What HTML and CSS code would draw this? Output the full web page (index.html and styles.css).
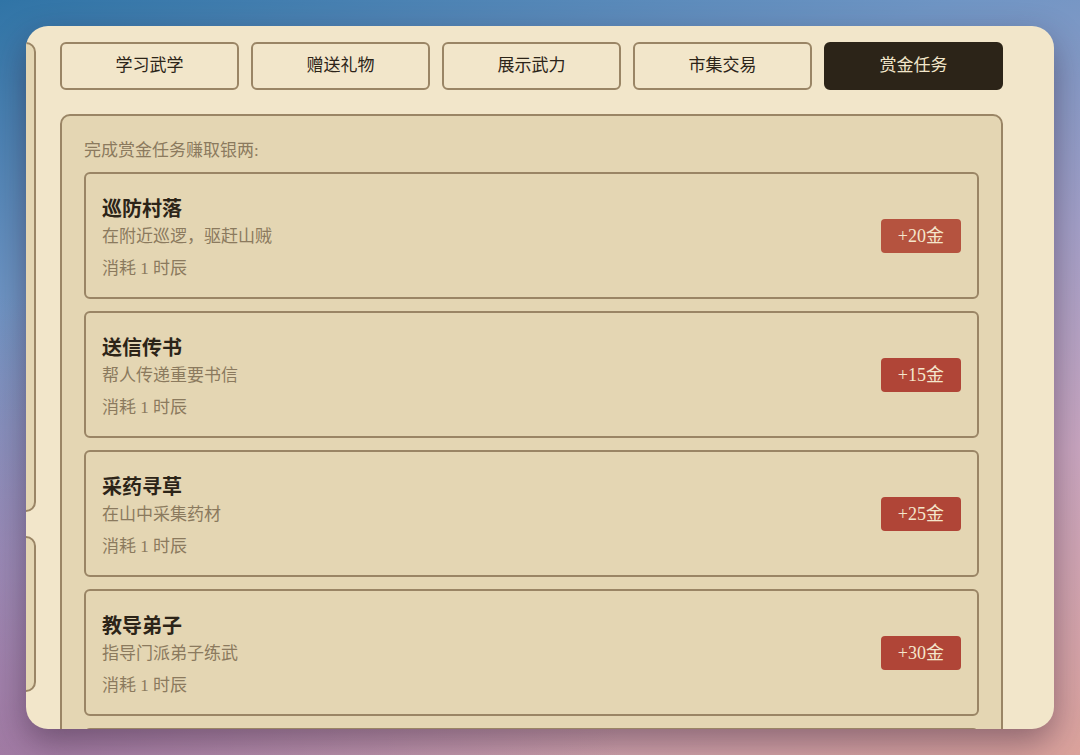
FILE: index.html
```html
<!DOCTYPE html>
<html lang="zh-CN">
<head>
<meta charset="utf-8">
<title>赏金任务</title>
<link rel="stylesheet" href="styles.css">
</head>
<body>
<div class="window">
  <aside class="sidebar">
    <div class="side-panel side-panel-tall"></div>
    <div class="side-panel side-panel-short"></div>
  </aside>
  <main class="main">
    <nav class="tabs">
      <button class="tab">学习武学</button>
      <button class="tab">赠送礼物</button>
      <button class="tab">展示武力</button>
      <button class="tab">市集交易</button>
      <button class="tab tab-active">赏金任务</button>
    </nav>
    <section class="panel">
      <div class="panel-label">完成赏金任务赚取银两:</div>
      <div class="quest-list">
        <div class="quest">
          <div class="quest-info">
            <div class="quest-title">巡防村落</div>
            <div class="quest-desc">在附近巡逻，驱赶山贼</div>
            <div class="quest-cost">消耗 1 时辰</div>
          </div>
          <div class="reward reward-hover">+20金</div>
        </div>
        <div class="quest">
          <div class="quest-info">
            <div class="quest-title">送信传书</div>
            <div class="quest-desc">帮人传递重要书信</div>
            <div class="quest-cost">消耗 1 时辰</div>
          </div>
          <div class="reward">+15金</div>
        </div>
        <div class="quest">
          <div class="quest-info">
            <div class="quest-title">采药寻草</div>
            <div class="quest-desc">在山中采集药材</div>
            <div class="quest-cost">消耗 1 时辰</div>
          </div>
          <div class="reward">+25金</div>
        </div>
        <div class="quest">
          <div class="quest-info">
            <div class="quest-title">教导弟子</div>
            <div class="quest-desc">指导门派弟子练武</div>
            <div class="quest-cost">消耗 1 时辰</div>
          </div>
          <div class="reward">+30金</div>
        </div>
        <div class="quest">
          <div class="quest-info">
            <div class="quest-title">护送商队</div>
            <div class="quest-desc">保护商队安全通过</div>
            <div class="quest-cost">消耗 2 时辰</div>
          </div>
          <div class="reward">+40金</div>
        </div>
      </div>
    </section>
  </main>
</div>
</body>
</html>
```

FILE: styles.css
```css
html, body {
  margin: 0;
  padding: 0;
}

body {
  width: 1080px;
  height: 755px;
  overflow: hidden;
  font-family: "Liberation Serif", "Noto Sans CJK SC", serif;
  font-size: 17px;
  line-height: 1.5;
  color: #2c2418;
  background:
    radial-gradient(ellipse 620px 460px at 0% 100%, rgba(140, 95, 145, 0.6), rgba(140, 95, 145, 0) 100%),
    linear-gradient(162deg, #3074a6 0%, #6f95c4 28%, #a3a0c8 52%, #c9a6c0 72%, #dca39c 100%);
  padding: 26px;
  box-sizing: border-box;
}

.window {
  width: 1028px;
  height: 703px;
  box-sizing: border-box;
  background: #f2e6ca;
  border-radius: 22px;
  overflow: hidden;
  box-shadow: 0 14px 34px rgba(40, 20, 40, 0.42);
  display: flex;
  gap: 24px;
  padding: 16px 51px 0 0;
}

.sidebar {
  flex: 0 0 300px;
  margin-left: -290px;
  display: flex;
  flex-direction: column;
  gap: 24px;
}

.side-panel {
  box-sizing: border-box;
  background: #e4d6b3;
  border: 2px solid #9a8565;
  border-radius: 10px;
}

.side-panel-tall {
  height: 470px;
}

.side-panel-short {
  height: 156px;
}

.main {
  flex: 1;
  min-width: 0;
  display: flex;
  flex-direction: column;
  gap: 24px;
}

.tabs {
  display: flex;
  gap: 12px;
}

.tab {
  flex: 1;
  font: inherit;
  color: #2c2418;
  background: #f2e6ca;
  border: 2px solid #9a8565;
  border-radius: 6px;
  padding: 9px 0 9px;
  line-height: 26px;
  text-align: center;
  cursor: pointer;
}

.tab-active {
  background: #2c2418;
  border-color: #2c2418;
  color: #f2e6ca;
}

.panel {
  flex: 0 0 auto;
  background: #e4d6b3;
  border: 2px solid #9a8565;
  border-radius: 10px;
  padding: 22px 22px 22px;
}

.panel-label {
  color: #8b7a5e;
  line-height: 25.5px;
  margin-bottom: 8.5px;
}

.quest-list {
  display: flex;
  flex-direction: column;
  gap: 12px;
}

.quest {
  display: flex;
  align-items: center;
  justify-content: space-between;
  border: 2px solid #9a8565;
  border-radius: 6px;
  padding: 20px 16px 16px;
}

.quest-info {
  display: flex;
  flex-direction: column;
}

.quest-title {
  font-size: 20px;
  font-weight: 700;
  line-height: 30px;
  color: #2c2418;
}

.quest-desc {
  color: #8b7a5e;
  line-height: 25.5px;
}

.quest-cost {
  color: #8b7a5e;
  line-height: 25.5px;
  margin-top: 6px;
}

.reward {
  background: #b04537;
  color: #f4e6cc;
  font-size: 18px;
  line-height: 26px;
  padding: 4px 17px;
  border-radius: 4px;
  margin-top: -4px;
}

.reward-hover {
  background: #b5533f;
}
```
